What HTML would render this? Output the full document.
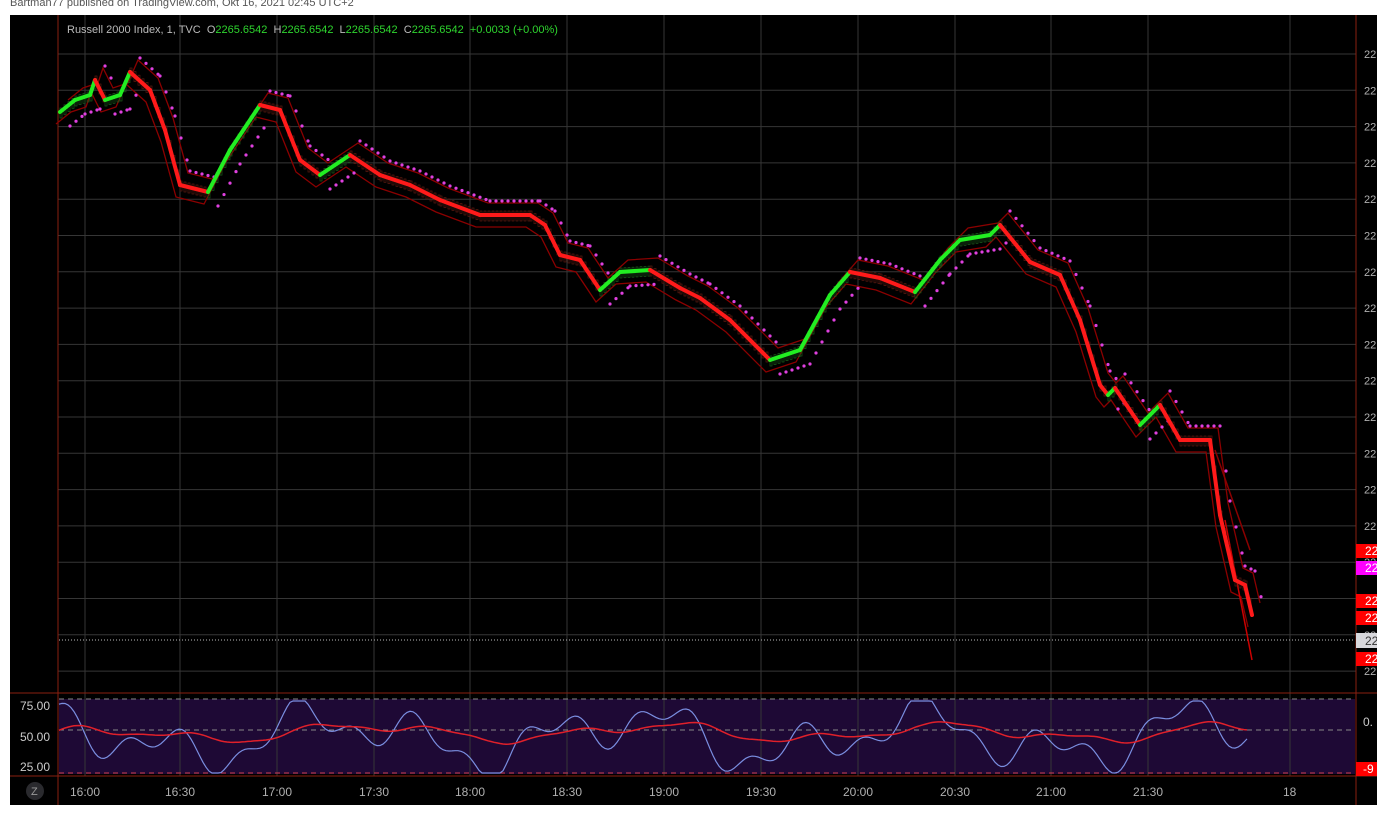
<!DOCTYPE html>
<html><head><meta charset="utf-8"><style>
html,body{margin:0;padding:0;background:#fff;width:1377px;height:815px;overflow:hidden;font-family:"Liberation Sans",sans-serif}
#hdr{position:absolute;left:10px;top:-3px;font-size:11px;color:#555}
svg{position:absolute;left:0;top:0}
</style></head><body>
<div id="hdr">Bartman77 published on TradingView.com, Okt 16, 2021 02:45 UTC+2</div>
<svg id="s" width="1377" height="815" xmlns="http://www.w3.org/2000/svg">
<rect x="10" y="15" width="1367" height="790" fill="#000"/>
<rect x="59" y="699" width="1296" height="75" fill="#1e0935"/>
<g id="grid" stroke="#363636" stroke-width="1"></g>
<g id="ticks" fill="#b0b0b0" font-size="12" font-family="Liberation Sans, sans-serif"></g>
<line x1="58" y1="15" x2="58" y2="805" stroke="#8a2010"/>
<line x1="1356" y1="15" x2="1356" y2="805" stroke="#8a2010"/>
<line x1="10" y1="693" x2="1377" y2="693" stroke="#8a2010"/>
<line x1="10" y1="776" x2="1377" y2="776" stroke="#8a2010"/>
<line x1="59" y1="699" x2="1355" y2="699" stroke="#888" stroke-dasharray="5,4"/>
<line x1="59" y1="730" x2="1355" y2="730" stroke="#888" stroke-dasharray="5,4"/>
<line x1="59" y1="773" x2="1355" y2="773" stroke="#d04050" stroke-dasharray="5,4"/>
<line x1="59" y1="640" x2="1355" y2="640" stroke="#bbb" stroke-dasharray="1,2"/>
<g id="main"></g>
<text x="67" y="33" font-size="11" fill="#bbb" font-family="Liberation Sans, sans-serif" xml:space="preserve" style="white-space:pre">Russell 2000 Index, 1, TVC  O<tspan fill="#2ed52e">2265.6542</tspan>  H<tspan fill="#2ed52e">2265.6542</tspan>  L<tspan fill="#2ed52e">2265.6542</tspan>  C<tspan fill="#2ed52e">2265.6542</tspan>  <tspan fill="#2ed52e">+0.0033 (+0.00%)</tspan></text>
<circle cx="35" cy="791" r="9" fill="#2a2a2e"/><text x="31" y="795" font-size="11" fill="#999">Z</text>
<g font-size="12" font-family="Liberation Sans, sans-serif" fill="#ccc">
<text x="20" y="710">75.00</text><text x="20" y="741">50.00</text><text x="20" y="771">25.00</text>
<text x="1363" y="726">0.</text>
</g>
<g font-size="12" font-family="Liberation Sans, sans-serif">
<rect x="1356" y="544" width="21" height="14" fill="#f00"/><text x="1365" y="555" fill="#fff">22</text>
<rect x="1356" y="561" width="21" height="14" fill="#f0f"/><text x="1365" y="572" fill="#fff">22</text>
<rect x="1356" y="594" width="21" height="14" fill="#f00"/><text x="1365" y="605" fill="#fff">22</text>
<rect x="1356" y="611" width="21" height="14" fill="#f00"/><text x="1365" y="622" fill="#fff">22</text>
<rect x="1356" y="633" width="21" height="15" fill="#d8d8dc"/><text x="1365" y="645" fill="#333">22</text>
<rect x="1356" y="652" width="21" height="14" fill="#f00"/><text x="1365" y="663" fill="#fff">22</text>
<rect x="1356" y="762" width="21" height="14" fill="#f00"/><text x="1363" y="773" fill="#fff">-9</text>
</g>
</svg>
<script>
const ns="http://www.w3.org/2000/svg";
function el(p,t,a){const e=document.createElementNS(ns,t);for(const k in a)e.setAttribute(k,a[k]);document.getElementById(p).appendChild(e);return e}
const xs=[85,180,277,374,470,567,664,761,858,955,1051,1148,1290],lb=["16:00","16:30","17:00","17:30","18:00","18:30","19:00","19:30","20:00","20:30","21:00","21:30","18"];
xs.forEach((x,i)=>{el("grid","line",{x1:x,y1:15,x2:x,y2:776});const t=el("ticks","text",{x:x-(lb[i].length>2?15:7),y:796});t.textContent=lb[i]});
for(let y=54;y<690;y+=36.3){el("grid","line",{x1:58,y1:y,x2:1356,y2:y});const t=el("ticks","text",{x:1364,y:y+4,"font-size":11});t.textContent="22"}
const P=[[60,112],[75,100],[90,95],[95,80],[105,100],[120,95],[130,72],[150,90],[165,130],[180,185],[208,192],[230,150],[260,105],[280,110],[300,160],[320,175],[350,155],[380,175],[410,185],[440,200],[480,215],[530,215],[545,225],[560,255],[580,260],[600,290],[620,272],[650,270],[680,288],[700,298],[730,320],[770,360],[800,350],[830,295],[850,272],[880,278],[915,292],[940,260],[960,240],[990,235],[1000,225],[1030,262],[1060,275],[1080,320],[1100,385],[1108,395],[1115,388],[1140,425],[1160,405],[1180,440],[1210,440],[1220,515],[1235,580],[1245,585],[1252,615]];
const ps=(a,dy)=>a.map(p=>p[0]+","+(p[1]+dy)).join(" ");
el("main","polyline",{points:ps(P.map((p,i)=>[p[0]+8,p[1]]),-12),fill:"none",stroke:"#8b0000","stroke-width":1.3});
el("main","polyline",{points:ps(P.map(p=>[p[0]-4,p[1]]),12),fill:"none",stroke:"#8b0000","stroke-width":1.3});
el("main","line",{x1:1215,y1:450,x2:1250,y2:550,stroke:"#8b0000","stroke-width":1.5});
el("main","line",{x1:1225,y1:520,x2:1252,y2:660,stroke:"#c00","stroke-width":1.5});
for(let i=0;i<P.length-1;i++){const a=P[i],b=P[i+1];for(let x=a[0];x<b[0];x+=4){const y=a[1]+(b[1]-a[1])*(x-a[0])/(b[0]-a[0]);el("main","rect",{x:x,y:y-4,width:2,height:10,fill:"none",stroke:b[1]<a[1]?"#1a5a1a":"#5a1a10","stroke-width":0.7})}}
for(let i=0;i<P.length-1;i++){const a=P[i],b=P[i+1];const up=b[1]<a[1];for(let x=a[0];x<b[0];x+=6){const y=a[1]+(b[1]-a[1])*(x-a[0])/(b[0]-a[0]);el("main","circle",{cx:x+10,cy:y+(up?14:-14),r:1.6,fill:"#e040e0"})}}
for(let i=0;i<P.length-1;i++){const a=P[i],b=P[i+1];el("main","line",{x1:a[0],y1:a[1],x2:b[0],y2:b[1],stroke:b[1]<a[1]?"#22ee22":"#ff1a1a","stroke-width":4,"stroke-linecap":"round"})}
function osc(pts,c,w){el("main","polyline",{points:pts.map(p=>p.join(",")).join(" "),fill:"none",stroke:c,"stroke-width":w})}
const B=[],R=[];let r=735;
for(let x=59;x<=1248;x+=3){const v=0.5+0.5*Math.sin(x/28)*Math.sin(x/71+1)+0.15*Math.sin(x/9);let y=773-Math.max(0,Math.min(1,v))*72;B.push([x,y.toFixed(1)]);r=r+(y-r)*0.08;R.push([x,((r+728)/2).toFixed(1)])}
osc(B,"#7a8ee0",1.2);osc(R,"#e0202a",1.5);
</script>
</body></html>
